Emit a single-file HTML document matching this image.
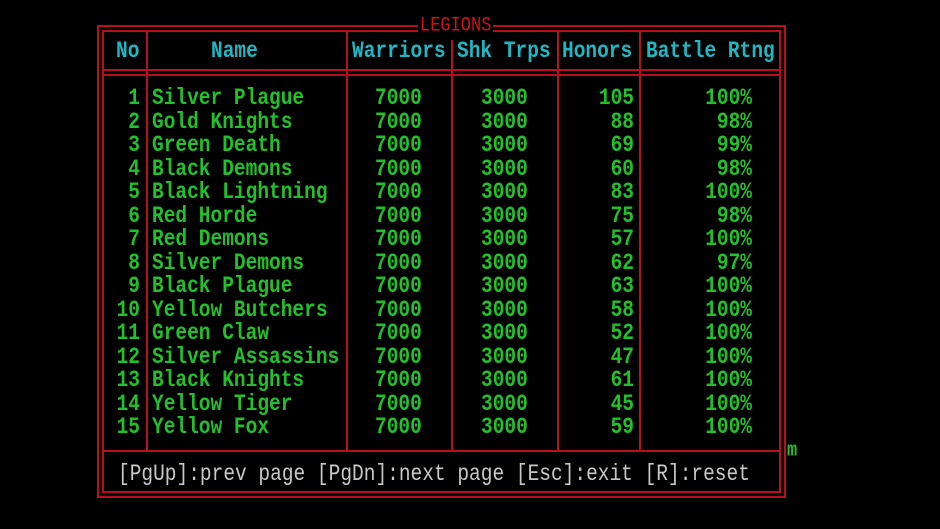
<!DOCTYPE html>
<html><head><meta charset="utf-8"><style>
html,body{margin:0;padding:0;background:#000;width:940px;height:529px;overflow:hidden}
body{position:relative;font-family:"Liberation Mono","DejaVu Sans Mono",monospace;font-size:19.5px;font-weight:bold}
.b{position:absolute;border:2px solid #b8101a;box-sizing:border-box}
.h{position:absolute;background:#b8101a;height:2px}
.v{position:absolute;background:#b8101a;width:2px}
.t{position:absolute;white-space:pre;line-height:22px;transform:scaleY(1.18)}
.c{color:#1eb8c4}.g{color:#22c02a}.w{color:#c8c8c8}.r{color:#d0101a}
.row{position:absolute;left:0;width:940px;height:22px}
.row span{position:absolute;white-space:pre;line-height:22px;color:#22c02a;transform:scaleY(1.18)}
.n{right:800px;text-align:right}
.nm{left:152px}
.wa{left:375px}
.sk{left:481px}
.ho{right:306px;text-align:right}
.bt{right:188px;text-align:right}
</style></head><body>
<div class="b" style="left:97px;top:25px;width:689px;height:473px"></div>
<div class="b" style="left:102px;top:30px;width:679px;height:463px"></div>
<div class="h" style="left:102px;top:69px;width:679px"></div>
<div class="h" style="left:102px;top:74px;width:679px"></div>
<div class="h" style="left:102px;top:450px;width:679px"></div>
<div class="v" style="left:146px;top:30px;height:421px"></div>
<div class="v" style="left:346px;top:30px;height:421px"></div>
<div class="v" style="left:451px;top:30px;height:421px"></div>
<div class="v" style="left:557px;top:30px;height:421px"></div>
<div class="v" style="left:639px;top:30px;height:421px"></div>
<div class="t r" style="left:418px;top:16px;background:#000;padding:0 2px;font-size:17px;font-weight:normal">LEGIONS</div>
<div class="t c" style="left:116px;top:40px">No</div>
<div class="t c" style="left:211px;top:40px">Name</div>
<div class="t c" style="left:352px;top:40px">Warriors</div>
<div class="t c" style="left:457px;top:40px">Shk Trps</div>
<div class="t c" style="left:562px;top:40px">Honors</div>
<div class="t c" style="left:646px;top:40px">Battle Rtng</div>

<div class="row" style="top:87px"><span class="n">1</span><span class="nm">Silver Plague</span><span class="wa">7000</span><span class="sk">3000</span><span class="ho">105</span><span class="bt">100%</span></div>
<div class="row" style="top:110.5px"><span class="n">2</span><span class="nm">Gold Knights</span><span class="wa">7000</span><span class="sk">3000</span><span class="ho">88</span><span class="bt">98%</span></div>
<div class="row" style="top:134px"><span class="n">3</span><span class="nm">Green Death</span><span class="wa">7000</span><span class="sk">3000</span><span class="ho">69</span><span class="bt">99%</span></div>
<div class="row" style="top:157.5px"><span class="n">4</span><span class="nm">Black Demons</span><span class="wa">7000</span><span class="sk">3000</span><span class="ho">60</span><span class="bt">98%</span></div>
<div class="row" style="top:181px"><span class="n">5</span><span class="nm">Black Lightning</span><span class="wa">7000</span><span class="sk">3000</span><span class="ho">83</span><span class="bt">100%</span></div>
<div class="row" style="top:204.5px"><span class="n">6</span><span class="nm">Red Horde</span><span class="wa">7000</span><span class="sk">3000</span><span class="ho">75</span><span class="bt">98%</span></div>
<div class="row" style="top:228px"><span class="n">7</span><span class="nm">Red Demons</span><span class="wa">7000</span><span class="sk">3000</span><span class="ho">57</span><span class="bt">100%</span></div>
<div class="row" style="top:251.5px"><span class="n">8</span><span class="nm">Silver Demons</span><span class="wa">7000</span><span class="sk">3000</span><span class="ho">62</span><span class="bt">97%</span></div>
<div class="row" style="top:275px"><span class="n">9</span><span class="nm">Black Plague</span><span class="wa">7000</span><span class="sk">3000</span><span class="ho">63</span><span class="bt">100%</span></div>
<div class="row" style="top:298.5px"><span class="n">10</span><span class="nm">Yellow Butchers</span><span class="wa">7000</span><span class="sk">3000</span><span class="ho">58</span><span class="bt">100%</span></div>
<div class="row" style="top:322px"><span class="n">11</span><span class="nm">Green Claw</span><span class="wa">7000</span><span class="sk">3000</span><span class="ho">52</span><span class="bt">100%</span></div>
<div class="row" style="top:345.5px"><span class="n">12</span><span class="nm">Silver Assassins</span><span class="wa">7000</span><span class="sk">3000</span><span class="ho">47</span><span class="bt">100%</span></div>
<div class="row" style="top:369px"><span class="n">13</span><span class="nm">Black Knights</span><span class="wa">7000</span><span class="sk">3000</span><span class="ho">61</span><span class="bt">100%</span></div>
<div class="row" style="top:392.5px"><span class="n">14</span><span class="nm">Yellow Tiger</span><span class="wa">7000</span><span class="sk">3000</span><span class="ho">45</span><span class="bt">100%</span></div>
<div class="row" style="top:416px"><span class="n">15</span><span class="nm">Yellow Fox</span><span class="wa">7000</span><span class="sk">3000</span><span class="ho">59</span><span class="bt">100%</span></div>

<div class="t g" style="left:787px;top:441px;font-size:17px">m</div>
<div class="t w" style="left:118px;top:463px;font-weight:normal">[PgUp]:prev page [PgDn]:next page [Esc]:exit [R]:reset</div>
</body></html>
